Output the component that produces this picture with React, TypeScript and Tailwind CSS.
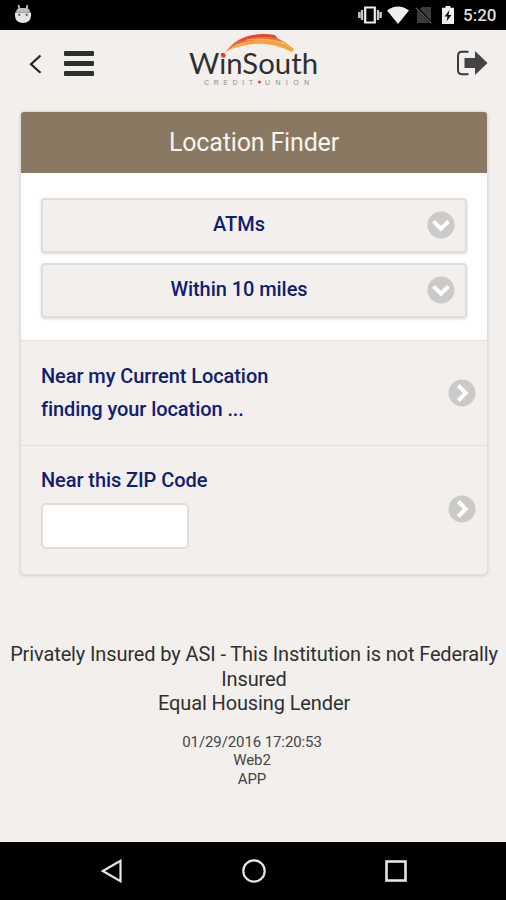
import React from "react";

const StatusBar = () => {
    return (
        <div className="flex h-[30px] items-center bg-black pl-[15px] pr-[10px]">
            <svg width="16" height="20" viewBox="0 0 16 20" className="mb-0.5">
                <path d="M3.500 1l1 4M12.500 1l-1 4" stroke="#bdbdbd" strokeWidth="1.800" />
                <path d="M1 8.500Q1.500 4 5 4h6q3.500 0 4 4.500Z" fill="#bdbdbd" />
                <path d="M0 8.500h16v3.500q-.5 7-8 7T0 12Z" fill="#e4e4e4" />
                <circle cx="4.300" cy="10.800" r="1.100" fill="#444" />
                <circle cx="11.700" cy="10.800" r="1.100" fill="#444" />
            </svg>
            <svg width="24" height="18" viewBox="0 0 24 18" className="ml-auto">
                <path d="M7.200 1.500h9.600v15H7.200Z" fill="#000" stroke="#eee" strokeWidth="2.200" />
                <path d="M1.300 6v6M4 4v10M22.700 6v6M20 4v10" stroke="#c4c4c4" strokeWidth="2.400" />
            </svg>
            <svg width="22" height="18" viewBox="0 0 22 18" className="ml-[5px]">
                <path d="M0 4.500Q11-3.500 22 4.500L11 18Z" fill="#eee" />
            </svg>
            <svg width="18" height="18" viewBox="0 0 18 18" className="ml-[6px]">
                <path d="M7 1h9v16H2V6Z" fill="#3d3d3d" />
                <path d="M1.500 1.500l15 16" stroke="#000" strokeWidth="3" />
                <path d="M.7 1.700l15.500 15.500" stroke="#555" strokeWidth="1.500" />
            </svg>
            <svg width="12" height="18" viewBox="0 0 12 18" className="ml-[9px]">
                <path d="M3.500 0h5v1.800H12V18H0V1.800h3.500Z" fill="#eee" />
                <path d="M7.500 4L2.500 10.500h3L4.500 15.500 9.500 9h-3Z" fill="#111" />
            </svg>
            <span className="ml-[9px] w-[33px] whitespace-nowrap text-[17px] font-medium leading-[30px] text-[#dedede]">5:20</span>
        </div>
    );
};

const Logo = () => {
    return (
        <svg width="134" height="56" viewBox="0 0 134 56" className="absolute left-[187px] top-[2px]">
            <defs>
                <linearGradient id="arc" x1="0" y1="1" x2="1" y2="0">
                    <stop offset="0" stopColor="#f39a35" />
                    <stop offset="0.500" stopColor="#e8512f" />
                    <stop offset="1" stopColor="#e5402b" />
                </linearGradient>
            </defs>
            <path d="M38 21Q53-2 88 3L91 7Q59 1 38 21Z" fill="url(#arc)" />
            <path d="M39.500 19Q60 1 90 6L101 12Q62 2 39.500 19Z" fill="#ee7032" />
            <path d="M40 18.500Q67 2 96 10L101 12.500 107 17 105 20Q74 4.500 40 18.500Z" fill="#f6a53c" />
            <path d="M60 8Q80 5 98 11.500" fill="none" stroke="#f8d9aa" strokeWidth="0.700" />
            <text x="2" y="42" textLength="129" lengthAdjust="spacingAndGlyphs" fontFamily="Lato" fontSize="29" fill="#303030">WinSouth</text>
            <circle cx="36.500" cy="23.500" r="2.300" fill="#e9432f" />
            <text x="17" y="52.500" textLength="49" fontFamily="Liberation Sans" fontSize="7" fill="#8c8c8c">CREDIT</text>
            <circle cx="72.500" cy="50" r="1.600" fill="#e9432f" />
            <text x="78" y="52.500" textLength="44" fontFamily="Liberation Sans" fontSize="7" fill="#8c8c8c">UNION</text>
        </svg>
    );
};

const Header = () => {
    return (
        <header className="relative h-[82px]">
            <button aria-label="Back" className="absolute left-[29px] top-[24px]">
                <svg width="13" height="20" viewBox="0 0 13 20" fill="none">
                    <path d="M11.500 1.500L2 10.300l9.500 8.500" stroke="#222" strokeWidth="2.200" />
                </svg>
            </button>
            <button aria-label="Menu" className="absolute left-[64px] top-[21px] flex flex-col gap-[5px]">
                <span className="h-[5px] w-[30px] rounded-[1px] bg-[#2e2f2f]" />
                <span className="h-[5px] w-[30px] rounded-[1px] bg-[#2e2f2f]" />
                <span className="h-[5px] w-[30px] rounded-[1px] bg-[#2e2f2f]" />
            </button>
            <Logo />
            <button aria-label="Log out" className="absolute left-[456px] top-[20px]">
                <svg width="32" height="26" viewBox="0 0 32 26" fill="none">
                    <path d="M12.500 1.800H6Q2 1.800 2 6v14q0 4.200 4 4.200h6.500" stroke="#3a3a3a" strokeWidth="2" />
                    <path d="M8.500 8h10.500V1l12.500 12L19 25v-7H8.500Z" fill="#444345" />
                </svg>
            </button>
        </header>
    );
};

const CircleChevron = ({ down = false }: { down?: boolean }) => {
    return (
        <svg width="28" height="28" viewBox="0 0 28 28" fill="none" className={down ? "rotate-90" : ""}>
            <circle cx="14" cy="14" r="13.500" fill="#cbcac8" />
            <path d="M10.300 6.500L17.700 14l-7.400 7.500" stroke="#fff" strokeWidth="4" />
        </svg>
    );
};

const SelectButton = ({ label }: { label: string }) => {
    return (
        <button className="relative h-[55px] w-full rounded-[4px] border-2 border-[#dfdedc] bg-[#f2efec] text-center text-[20px] font-medium tracking-[-0.06px] text-[#10206f] shadow-[0_1px_3px_rgba(0,0,0,0.15)]">
            <span className="relative right-[15px] -top-[2px]">{label}</span>
            <span className="absolute right-[10px] top-[11px]">
                <CircleChevron down />
            </span>
        </button>
    );
};

const App = () => {
    return (
        <div className="flex h-[900px] w-[506px] flex-col overflow-hidden bg-[#f2efec] font-['Roboto',sans-serif]">
            <StatusBar />
            <Header />

            <main className="ml-[21px] mr-[19px] h-[462px] rounded-[4px] shadow-[0_0_0_1px_#dfdddb,0_1px_4px_rgba(0,0,0,0.2)]">
                <h1 className="h-[61px] rounded-t-[3px] bg-[#897962] text-center text-[25px] leading-[61px] tracking-[-0.16px] text-[#f8f5f1]">Location Finder</h1>
                <div className="flex h-[167px] flex-col gap-[10px] bg-white px-[20px] pt-[25px]">
                    <SelectButton label="ATMs" />
                    <SelectButton label="Within 10 miles" />
                </div>
                <div className="flex h-[106px] items-center justify-between border-y border-[#e2e0de] pl-[20px] pr-[11px] text-[20px] font-medium leading-[33px] tracking-[-0.08px] text-[#10206f]">
                    <div>
                        <p>Near my Current Location</p>
                        <p>finding your location ...</p>
                    </div>
                    <CircleChevron />
                </div>
                <div className="flex h-[128px] items-center justify-between pb-[2px] pl-[20px] pr-[11px]">
                    <div className="pb-[6px]">
                        <label htmlFor="zip" className="block text-[20px] font-medium leading-[33px] tracking-[-0.08px] text-[#10206f]">Near this ZIP Code</label>
                        <input id="zip" className="mt-[6px] block h-[46px] w-[148px] rounded-[5px] border-2 border-[#e0dedc] bg-white" />
                    </div>
                    <CircleChevron />
                </div>
            </main>

            <footer className="mt-[68px] pl-[2px] text-center text-[#303030]">
                <div className="whitespace-nowrap text-[20px] leading-[24.500px] tracking-[-0.12px]">
                    <p>Privately Insured by ASI - This Institution is not Federally</p>
                    <p>Insured</p>
                    <p>Equal Housing Lender</p>
                </div>
                <div className="mt-[17px] pr-[4px] text-[15px] leading-[18.500px] tracking-[-0.1px] text-[#454545]">
                    <p>01/29/2016 17:20:53</p>
                    <p>Web2</p>
                    <p>APP</p>
                </div>
            </footer>

            <nav className="mt-auto flex h-[58px] items-center bg-black">
                <svg width="22" height="24" viewBox="0 0 22 24" fill="none" className="ml-[101px]">
                    <path d="M19.500 1.800v20.400L1.800 12Z" stroke="#e6e6e6" strokeWidth="2.200" />
                </svg>
                <svg width="24" height="24" viewBox="0 0 24 24" fill="none" className="ml-[119px]">
                    <circle cx="12" cy="12" r="10.700" stroke="#e6e6e6" strokeWidth="2.200" />
                </svg>
                <svg width="22" height="22" viewBox="0 0 22 22" fill="none" className="ml-[119px]">
                    <rect x="1.500" y="1.500" width="19" height="19" stroke="#e6e6e6" strokeWidth="2.600" />
                </svg>
            </nav>
        </div>
    );
};
export default App;
